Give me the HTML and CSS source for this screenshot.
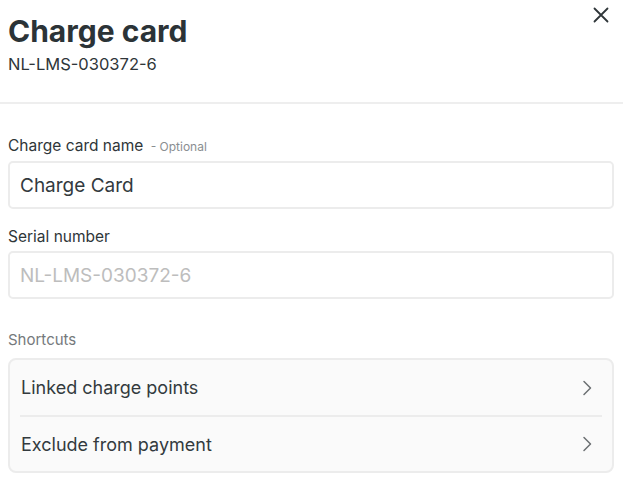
FILE: index.html
```html
<!DOCTYPE html>
<html lang="en">

<head>
    <meta charset="UTF-8" />
    <meta name="viewport" content="width=device-width, initial-scale=1.0" />
    <title>Charge card</title>
    <link rel="stylesheet" href="styles.css">
</head>

<body>

    <div class="header">
        <div class="heading">
            <h1>Charge card</h1>
            <div class="subtitle">NL-LMS-030372-6</div>
        </div>
        <button class="close" aria-label="Close">
            <svg width="16" height="16" viewBox="0 0 16 16">
                <path d="M1.5 1.5 L14.5 14.5 M14.5 1.5 L1.5 14.5" stroke="#2f3639" stroke-width="1.8" fill="none" stroke-linecap="round" />
            </svg>
        </button>
    </div>

    <div class="content">
        <div class="field field-name">
            <label for="cardName">Charge card name <span class="optional">- Optional</span></label>
            <input type="text" id="cardName" value="Charge Card" />
        </div>

        <div class="field field-serial">
            <label for="serialNumber">Serial number</label>
            <input type="text" id="serialNumber" placeholder="NL-LMS-030372-6" disabled />
        </div>

        <div class="shortcuts">
            <div class="section-title">Shortcuts</div>
            <div class="list">
                <a class="list-item" href="#">
                    <span>Linked charge points</span>
                    <svg class="chevron" width="10" height="16" viewBox="0 0 10 16">
                        <path d="M2 1.5 L8.5 8 L2 14.5" stroke="#6b6f72" stroke-width="1.5" fill="none" stroke-linecap="round" stroke-linejoin="round" />
                    </svg>
                </a>
                <a class="list-item" href="#">
                    <span>Exclude from payment</span>
                    <svg class="chevron" width="10" height="16" viewBox="0 0 10 16">
                        <path d="M2 1.5 L8.5 8 L2 14.5" stroke="#6b6f72" stroke-width="1.5" fill="none" stroke-linecap="round" stroke-linejoin="round" />
                    </svg>
                </a>
            </div>
        </div>
    </div>

</body>

</html>
```

FILE: styles.css
```css
body {
    font-family: Inter, Lato, Arial, sans-serif;
    background-color: #ffffff;
    color: #333a3e;
    margin: 0;
    padding: 0;
}

/* Header */
.header {
    display: flex;
    justify-content: space-between;
    align-items: flex-start;
    padding: 13px 14px 28px 8px;
    border-bottom: 2px solid #eeeeee;
}

h1 {
    margin: 0;
    font-size: 30px;
    line-height: 36px;
    font-weight: 700;
    color: #2b3337;
}

.subtitle {
    margin-top: 5px;
    font-size: 16.5px;
    line-height: 20px;
    color: #2f3639;
}

.close {
    background: none;
    border: none;
    padding: 0;
    margin-top: -6px;
    cursor: pointer;
    display: flex;
}

/* Form */
.content {
    padding: 32px 9px 0 8px;
}

.field {
    display: flex;
    flex-direction: column;
    gap: 4px;
    margin-bottom: 18px;
}

label {
    font-size: 15.5px;
    line-height: 20px;
    color: #2f3639;
}

.optional {
    font-size: 12px;
    color: #8a8e91;
    margin-left: 3px;
}

input {
    height: 48px;
    padding: 0 10px;
    border: 2px solid #ececec;
    border-radius: 5px;
    box-sizing: border-box;
    font-family: inherit;
    font-size: 19px;
    color: #333a3e;
    background-color: #ffffff;
}

input::placeholder {
    color: #bdbdbd;
}

/* Shortcuts */
.shortcuts {
    margin-top: 31px;
}

.section-title {
    font-size: 15px;
    line-height: 20px;
    color: #75797c;
    margin-bottom: 8px;
}

.list {
    background-color: #fafafa;
    border: 2px solid #ececec;
    border-radius: 8px;
    padding: 0 10px;
}

.list-item {
    display: flex;
    justify-content: space-between;
    align-items: center;
    height: 55px;
    padding: 0 10px 0 1px;
    color: #333a3e;
    text-decoration: none;
    font-size: 18px;
}

.list-item + .list-item {
    height: 54px;
    border-top: 2px solid #ececec;
}
```
